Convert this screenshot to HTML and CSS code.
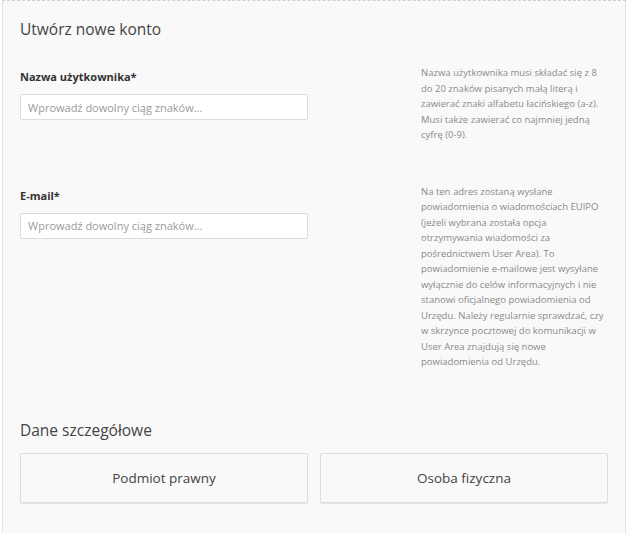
FILE: index.html
```html
<!doctype html>
<html>
<head>
<meta http-equiv="Content-Type" content="text/html; charset=utf-8"/>
<title>Utwórz nowe konto</title>
<link rel="stylesheet" href="styles.css">
</head>

<body>
<div class="panel">
	<h2 class="title">Utwórz nowe konto</h2>

	<div class="row">
		<div class="field">
			<label for="username">Nazwa użytkownika*</label>
			<input id="username" type="text" placeholder="Wprowadź dowolny ciąg znaków...">
		</div>
		<p class="help">Nazwa użytkownika musi składać się z 8<br>do 20 znaków pisanych małą literą i<br>zawierać znaki alfabetu łacińskiego (a-z).<br>Musi także zawierać co najmniej jedną<br>cyfrę (0-9).</p>
	</div>

	<div class="row">
		<div class="field">
			<label for="email">E-mail*</label>
			<input id="email" type="text" placeholder="Wprowadź dowolny ciąg znaków...">
		</div>
		<p class="help">Na ten adres zostaną wysłane<br>powiadomienia o wiadomościach EUIPO<br>(jeżeli wybrana została opcja<br>otrzymywania wiadomości za<br>pośrednictwem User Area). To<br>powiadomienie e-mailowe jest wysyłane<br>wyłącznie do celów informacyjnych i nie<br>stanowi oficjalnego powiadomienia od<br>Urzędu. Należy regularnie sprawdzać, czy<br>w skrzynce pocztowej do komunikacji w<br>User Area znajdują się nowe<br>powiadomienia od Urzędu.</p>
	</div>

	<h2 class="title sub">Dane szczegółowe</h2>
	<div class="choices">
		<a href="javascript:;" class="choice">Podmiot prawny</a>
		<a href="javascript:;" class="choice">Osoba fizyczna</a>
	</div>
</div>
</body>
</html>
```

FILE: styles.css
```css
*{ margin:0; padding:0; box-sizing:border-box;}
html,body{ background:#fff;}
body{ font-family:"Open Sans","Liberation Sans",sans-serif; color:#444; width:627px; height:533px; overflow:hidden;}

.panel{ margin-left:2px; width:624px; min-height:540px; background:#f9f9f9; border-left:1px solid #e2e2e2; border-right:1px solid #e2e2e2; border-top:1px dashed #cfcfcf; padding:17px 17px 0 17px;}

.title{ font-size:15.5px; line-height:23px; font-weight:400; color:#444;}
.title.sub{ margin-top:49px;}

.row{ display:grid; grid-template-columns:288px 1fr; column-gap:113px; align-items:start; margin-top:24px;}
.row + .row{ margin-top:41px;}

.field label{ display:block; margin-top:3px; font-size:11px; line-height:18px; font-weight:700; color:#333;}
.field input{ display:block; width:288px; height:26px; margin-top:8px; padding:0 7px; border:1px solid #dcdcdc; border-radius:2px; background:#fff; font-family:inherit; font-size:11px; color:#444; outline:none;}
.field input::placeholder{ color:#9a9a9a;}

.help{ font-size:9.5px; line-height:15.5px; color:#8a8a8a; white-space:nowrap;}

.choices{ display:flex; gap:12px; margin-top:11px;}
.choice{ flex:0 0 288px; height:50px; display:flex; align-items:center; justify-content:center; background:#f9f9f9; border:1px solid #dedede; border-radius:2px; box-shadow:0 1px 1px rgba(0,0,0,.08); font-size:13.5px; color:#444; text-decoration:none;}
```
